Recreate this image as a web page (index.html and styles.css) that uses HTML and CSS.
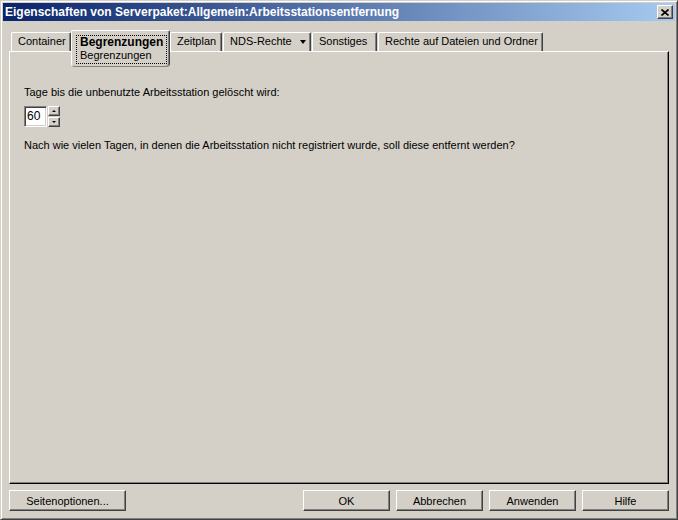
FILE: index.html
```html
<!DOCTYPE html>
<html lang="de">
<head>
    <meta charset="UTF-8">
    <title>Eigenschaften von Serverpaket</title>
    <link rel="stylesheet" href="styles.css">
</head>
<body>
    <div class="window">
        <div class="titlebar">
            <span class="title">Eigenschaften von Serverpaket:Allgemein:Arbeitsstationsentfernung</span>
            <button class="close-btn">
                <svg width="8" height="7" viewBox="0 0 8 7">
                    <path d="M0.5 0.5 L7.5 6.5 M7.5 0.5 L0.5 6.5" stroke="#000" stroke-width="1.6" fill="none"/>
                </svg>
            </button>
        </div>

        <div class="tabs">
            <div class="tab tab-container">Container</div>
            <div class="tab active">
                <div class="focus">
                    <b>Begrenzungen</b>
                    <span>Begrenzungen</span>
                </div>
            </div>
            <div class="tab tab-zeitplan">Zeitplan</div>
            <div class="tab tab-nds">NDS-Rechte <span class="arrow"></span></div>
            <div class="tab tab-sonst">Sonstiges</div>
            <div class="tab tab-rechte">Rechte auf Dateien und Ordner</div>
        </div>

        <div class="panel">
            <div class="label">Tage bis die unbenutzte Arbeitsstation gelöscht wird:</div>
            <div class="spinner">
                <div class="spin-value">60</div>
                <div class="spin-buttons">
                    <div class="spin-btn"><span class="up"></span></div>
                    <div class="spin-btn"><span class="down"></span></div>
                </div>
            </div>
            <div class="hint">Nach wie vielen Tagen, in denen die Arbeitsstation nicht registriert wurde, soll diese entfernt werden?</div>
        </div>

        <div class="buttons">
            <button class="btn btn-wide">Seitenoptionen...</button>
            <div class="spacer"></div>
            <button class="btn">OK</button>
            <button class="btn">Abbrechen</button>
            <button class="btn">Anwenden</button>
            <button class="btn">Hilfe</button>
        </div>
    </div>
</body>
</html>
```

FILE: styles.css
```css
body {
    margin: 0;
    background-color: #d4d0c8;
    font-family: "Liberation Sans", Arial, sans-serif;
    font-size: 11px;
    color: #000;
}
.window {
    width: 678px;
    height: 520px;
    box-sizing: border-box;
    border: 1px solid;
    border-color: #d4d0c8 #404040 #404040 #d4d0c8;
    box-shadow: inset 1px 1px #fff, inset -1px -1px #808080;
    padding: 2px;
    display: flex;
    flex-direction: column;
}
.titlebar {
    height: 18px;
    background: linear-gradient(to right, #0a246a, #a6caf0);
    display: flex;
    align-items: center;
    padding: 0 2px 0 2px;
}
.title {
    flex: 1;
    color: #fff;
    font-weight: bold;
    font-size: 12px;
    white-space: nowrap;
}
.close-btn {
    width: 16px;
    height: 14px;
    padding: 0;
    background-color: #d4d0c8;
    border: 1px solid;
    border-color: #fff #404040 #404040 #fff;
    box-shadow: inset -1px -1px #808080;
    display: flex;
    align-items: center;
    justify-content: center;
}
.close-btn svg {
    display: block;
}
.tabs {
    margin-top: 9px;
    height: 21px;
    padding-left: 8px;
    display: flex;
    align-items: flex-start;
    position: relative;
    z-index: 1;
}
.tab {
    margin-top: 2px;
    height: 19px;
    box-sizing: border-box;
    line-height: 17px;
    padding: 0 6px;
    border: 1px solid;
    border-bottom: none;
    border-color: #fff #404040 #fff #fff;
    box-shadow: inset -1px 0 #808080;
    border-radius: 2px 2px 0 0;
    white-space: nowrap;
}
.tab-container { width: 60px; }
.tab-zeitplan { width: 52px; }
.tab-nds { width: 88px; margin-left: 1px; }
.tab-sonst { width: 65px; margin-left: 1px; }
.tab-rechte { width: 165px; margin-left: 1px; }
.tab.active {
    margin-top: 0;
    width: 99px;
    height: 37px;
    padding: 4px 2px 2px 4px;
    background-color: #d4d0c8;
    border-bottom: 1px solid #808080;
    border-radius: 2px 2px 4px 4px;
}
.focus {
    height: 100%;
    box-sizing: border-box;
    border: 1px dotted #000;
    padding: 0 0 0 3px;
    display: flex;
    flex-direction: column;
}
.focus b {
    font-size: 12px;
    line-height: 12px;
}
.focus span {
    margin-top: 1px;
    line-height: 13px;
}
.arrow {
    display: inline-block;
    margin-left: 5px;
    vertical-align: middle;
    border-left: 3.5px solid transparent;
    border-right: 3.5px solid transparent;
    border-top: 4px solid #000;
}
.panel {
    flex: 1;
    margin: 0 6px;
    padding: 34px 14px 0 14px;
    border: 1px solid;
    border-color: #fff #000 #000 #fff;
    box-shadow: inset -1px -1px #808080;
}
.label {
    line-height: 13px;
}
.spinner {
    margin-top: 7px;
    display: flex;
    height: 21px;
}
.spin-value {
    width: 19px;
    background-color: #fff;
    border: 1px solid;
    border-color: #808080 #fff #fff #808080;
    box-shadow: inset 1px 1px #404040, inset -1px -1px #d4d0c8;
    padding-left: 2px;
    line-height: 19px;
    font-size: 12px;
}
.spin-buttons {
    display: flex;
    flex-direction: column;
    margin-left: 1px;
}
.spin-btn {
    width: 12px;
    height: 10px;
    box-sizing: border-box;
    border: 1px solid;
    border-color: #fff #404040 #404040 #fff;
    box-shadow: inset -1px -1px #808080;
    display: flex;
    align-items: center;
    justify-content: center;
}
.spin-btn + .spin-btn {
    margin-top: 1px;
}
.up, .down {
    border-left: 2px solid transparent;
    border-right: 2px solid transparent;
}
.up { border-bottom: 2px solid #000; }
.down { border-top: 2px solid #000; }
.hint {
    margin-top: 12px;
    line-height: 13px;
}
.buttons {
    display: flex;
    gap: 6px;
    margin: 6px 6px 6px 6px;
    height: 21px;
}
.spacer {
    flex: 1;
}
.btn {
    width: 87px;
    height: 21px;
    padding: 0;
    font-family: "Liberation Sans", Arial, sans-serif;
    font-size: 11px;
    background-color: #d4d0c8;
    border: 1px solid;
    border-color: #fff #404040 #404040 #fff;
    box-shadow: inset -1px -1px #808080;
}
.btn-wide {
    width: 117px;
}
```
